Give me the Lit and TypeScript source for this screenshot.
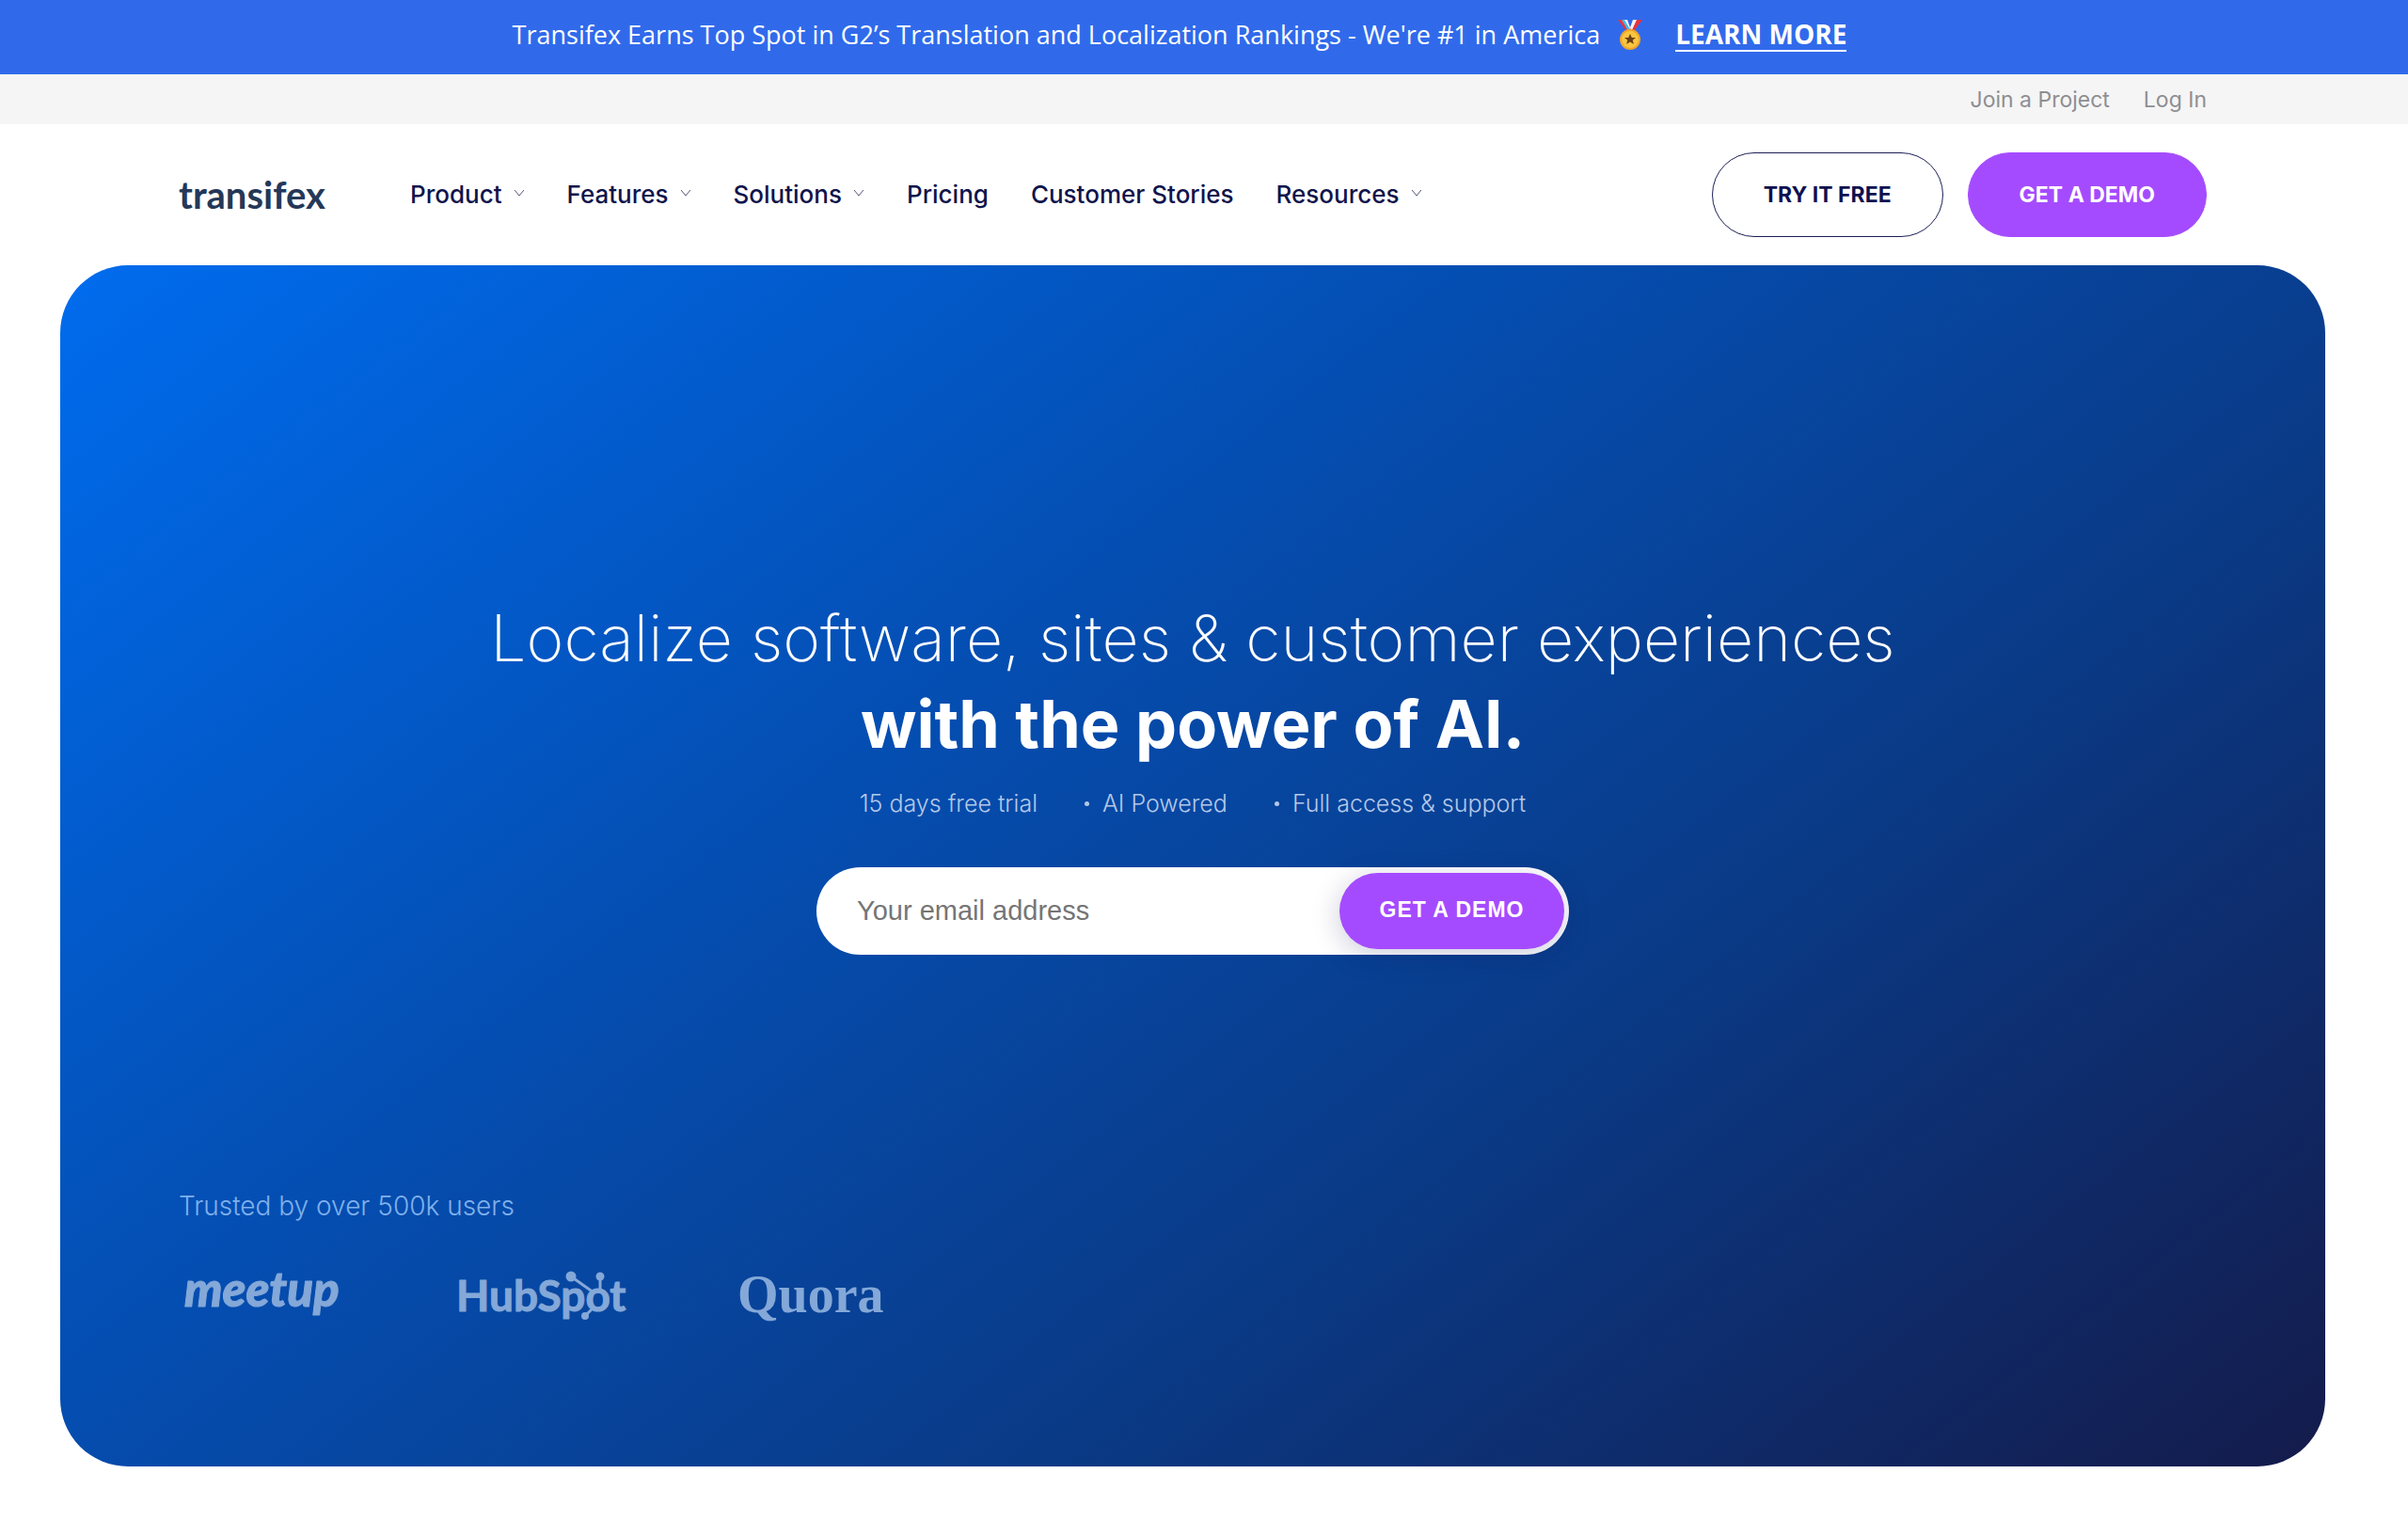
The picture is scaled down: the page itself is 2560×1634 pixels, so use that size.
import { LitElement, html, css, svg, nothing } from "lit";
import { customElement } from "lit/decorators.js";

interface NavItem {
  label: string;
  menu: boolean;
}

const NAV: NavItem[] = [
  { label: "Product", menu: true },
  { label: "Features", menu: true },
  { label: "Solutions", menu: true },
  { label: "Pricing", menu: false },
  { label: "Customer Stories", menu: false },
  { label: "Resources", menu: true },
];

const PERKS = ["15 days free trial", "AI Powered", "Full access & support"];

const reset = css`
  *,
  *::before,
  *::after {
    box-sizing: border-box;
  }
  a {
    color: inherit;
    text-decoration: none;
  }
  button {
    margin: 0;
    padding: 0;
    border: 0;
    background: none;
    color: inherit;
    font: inherit;
    cursor: pointer;
  }
`;

@customElement("promo-banner")
export class PromoBanner extends LitElement {
  static styles = [
    reset,
    css`
      :host {
        display: block;
        background: #306aeb;
        color: #fff;
        font-family: "Open Sans", "Noto Sans", sans-serif;
      }
      .banner {
        display: flex;
        justify-content: center;
        align-items: center;
        height: 79px;
        padding: 0 52px 6px 0;
        font-size: 27px;
        line-height: 36px;
      }
      .medal {
        width: 28px;
        height: 32px;
        margin: 0 34px 0 18px;
      }
      .more {
        border-bottom: 2px solid #fff;
        font-size: 28px;
        font-weight: 700;
        line-height: 34px;
      }
    `,
  ];

  render() {
    return html`
      <div class="banner">
        <span>Transifex Earns Top Spot in G2’s Translation and Localization Rankings - We're #1 in America</span>
        <svg class="medal" viewBox="0 0 28 32" role="img" aria-label="Medal">
          <path d="M1 0h8l8 13-4 3z" fill="#e8333f" />
          <path d="M27 0h-8l-8 13 4 3z" fill="#e8333f" />
          <path d="M7 0h4l4 11-2 2zM21 0h-4l-4 11 2 2z" fill="#f1f5fb" />
          <path d="M5 0h3l7 12-2 2z" fill="#45b8e6" />
          <circle cx="14" cy="21" r="11" fill="#f0a62c" />
          <circle cx="14" cy="21" r="9" fill="#fbc53f" />
          <path d="M14 15l1.800 4h4.200l-3.300 2.700 1.300 4.300-4-2.500-4 2.500 1.300-4.300L8 19h4.200z" fill="#6b4016" />
        </svg>
        <a class="more" href="#learn">LEARN MORE</a>
      </div>
    `;
  }
}

@customElement("site-header")
export class SiteHeader extends LitElement {
  static styles = [
    reset,
    css`
      :host {
        display: block;
      }
      .utility {
        display: flex;
        justify-content: flex-end;
        align-items: center;
        gap: 36px;
        height: 53px;
        padding: 0 214px 0 190px;
        background: #f5f5f5;
        color: #8e8e92;
        font-size: 23px;
      }
      .main {
        display: flex;
        align-items: center;
        padding: 30px 214px 30px 190px;
      }
      .brand {
        width: 246px;
        color: #253858;
        font-family: Lato, sans-serif;
        font-size: 40px;
        font-weight: 700;
        line-height: 48px;
      }
      .nav {
        display: flex;
        gap: 45px;
        flex: 1;
        color: #10144c;
        font-size: 26px;
        font-weight: 500;
        line-height: 32px;
        white-space: nowrap;
      }
      .item {
        display: flex;
        align-items: center;
        gap: 12px;
      }
      .chevron {
        width: 12px;
        height: 8px;
        margin-bottom: 4px;
        fill: none;
        stroke: #50557a;
      }
      .actions {
        display: flex;
        gap: 26px;
        font-size: 23px;
        font-weight: 700;
        white-space: nowrap;
      }
      .pill {
        height: 90px;
        padding: 0 54px;
        border: 1px solid #1c1f55;
        border-radius: 45px;
        color: #0d1150;
      }
      .solid {
        border-color: #a54bff;
        background: #a54bff;
        color: #fff;
      }
    `,
  ];

  render() {
    return html`
      <div class="utility">
        <a href="#join">Join a Project</a>
        <a href="#login">Log In</a>
      </div>
      <div class="main">
        <a class="brand" href="#home">transifex</a>
        <nav class="nav">
          ${NAV.map(({ label, menu }) =>
            menu
              ? html`<button class="item" type="button" aria-haspopup="true">
                  ${label}
                  <svg class="chevron" viewBox="0 0 12 8" aria-hidden="true"><path d="M1 1l5 6 5-6" /></svg>
                </button>`
              : html`<a class="item" href="#${label.toLowerCase().replace(" ", "-")}">${label}</a>`,
          )}
        </nav>
        <div class="actions">
          <button class="pill" type="button">TRY IT FREE</button>
          <button class="pill solid" type="button">GET A DEMO</button>
        </div>
      </div>
    `;
  }
}

@customElement("hero-panel")
export class HeroPanel extends LitElement {
  static styles = [
    reset,
    css`
      :host {
        display: block;
        padding: 0 88px 0 64px;
      }
      .hero {
        padding: 351px 126px 149px;
        border-radius: 72px;
        background: linear-gradient(142deg, #006cee 0%, #0450b6 35%, #0a3a86 66%, #141b4b 100%);
        color: #fff;
      }
      .title {
        margin: 0;
        font-size: 68px;
        font-weight: 200;
        line-height: 91px;
        text-align: center;
      }
      .strong {
        display: block;
        font-size: 70px;
        font-weight: 700;
      }
      .perks {
        display: flex;
        justify-content: center;
        margin: 21px 0 50px;
        padding: 0;
        color: #b4c8e8;
        font-size: 25px;
        font-weight: 300;
        line-height: 36px;
        list-style: none;
      }
      .perk {
        display: flex;
        align-items: center;
      }
      .dot {
        width: 5px;
        height: 5px;
        margin: 0 14px 0 50px;
        border-radius: 50%;
        background: currentColor;
      }
      .signup {
        display: flex;
        width: 800px;
        max-width: 100%;
        height: 93px;
        margin: 0 auto;
        padding: 6px 5px;
        border-radius: 47px;
        background: #fff;
      }
      .email {
        flex: 1;
        min-width: 0;
        padding: 0 0 0 38px;
        border: 0;
        outline: 0;
        background: transparent;
        color: #222;
        font-family: "Liberation Sans", Arial, sans-serif;
        font-size: 29px;
      }
      .email::placeholder {
        color: #757575;
        opacity: 1;
      }
      .submit {
        width: 239px;
        padding-bottom: 3px;
        border-radius: 41px;
        background: #a54bff;
        box-shadow: 0 6px 30px rgba(20, 20, 90, 0.22);
        color: #fff;
        font-family: "Liberation Sans", Arial, sans-serif;
        font-size: 23px;
        font-weight: 700;
        letter-spacing: 1px;
      }
      .trusted {
        margin: 249px 0 46px;
        color: #7fb0ec;
        font-size: 28px;
        font-weight: 300;
        line-height: 36px;
      }
      .logos {
        display: grid;
        grid-template-columns: repeat(3, 298px);
      }
      .logo {
        width: 186px;
        height: 64px;
        overflow: visible;
        color: #84a8d8;
        fill: currentColor;
      }
      .meetup {
        font: italic 900 51px Lato, sans-serif;
        stroke: currentColor;
        stroke-width: 1;
        stroke-linejoin: round;
      }
      .hubspot {
        font: 700 46px Lato, sans-serif;
        stroke: currentColor;
        stroke-width: 1;
      }
      .spokes {
        fill: none;
        stroke: currentColor;
        stroke-width: 3;
      }
      .quora {
        font: 700 56px "Liberation Serif", serif;
      }
    `,
  ];

  render() {
    return html`
      <section class="hero">
        <h1 class="title">
          Localize software, sites &amp; customer experiences
          <span class="strong">with the power of AI.</span>
        </h1>
        <ul class="perks">
          ${PERKS.map((perk, i) => html`<li class="perk">${i ? html`<span class="dot"></span>` : nothing}${perk}</li>`)}
        </ul>
        <form class="signup" @submit=${(e: Event) => e.preventDefault()}>
          <input class="email" type="email" placeholder="Your email address" aria-label="Your email address" />
          <button class="submit" type="submit">GET A DEMO</button>
        </form>
        <p class="trusted">Trusted by over 500k users</p>
        <div class="logos">
          <svg class="logo" viewBox="0 0 186 64">${svg`<text class="meetup" x="6" y="43">meetup</text>`}</svg>
          <svg class="logo" viewBox="0 0 186 64">
            ${svg`<text class="hubspot" x="-3" y="48">HubSpot</text>
              <path class="spokes" d="M119 11l24 17M150 11v15M134 53l9-9" />
              <circle cx="119" cy="11" r="5.500" />
              <circle cx="150" cy="11" r="4.500" />
              <circle cx="134" cy="53" r="4" />`}
          </svg>
          <svg class="logo" viewBox="0 0 186 64">${svg`<text class="quora" x="-2" y="49">Quora</text>`}</svg>
        </div>
      </section>
    `;
  }
}

@customElement("app-root")
export class AppRoot extends LitElement {
  static styles = css`
    :host {
      display: block;
      min-height: 100vh;
      background: #fff;
      font-family: Inter, "Open Sans", sans-serif;
    }
  `;

  render() {
    return html`
      <promo-banner></promo-banner>
      <site-header></site-header>
      <hero-panel></hero-panel>
    `;
  }
}
